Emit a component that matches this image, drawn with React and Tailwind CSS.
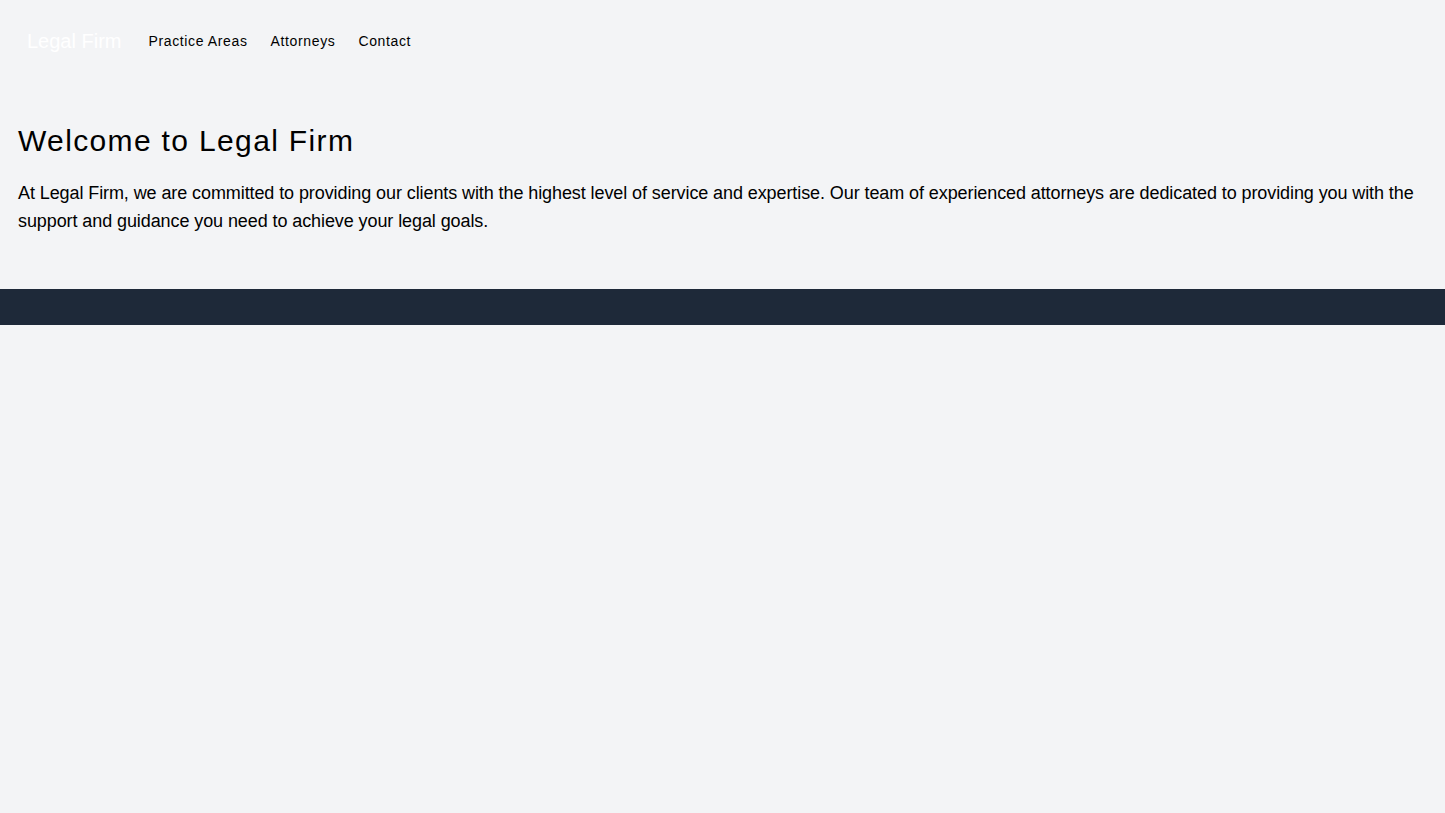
export default function App() {
  const links = ['Practice Areas', 'Attorneys', 'Contact'];

  return (
    <div className="min-h-[813px] bg-gray-100 font-['Liberation_Sans',sans-serif] text-black">
      <header className="flex items-center px-6 pb-6 pt-[27px]">
        <span className="ml-[3px] mr-[27px] text-xl leading-7 text-white">Legal Firm</span>
        <nav className="flex items-center gap-[23px] text-sm tracking-[0.045em]">
          {links.map((link) => (
            <a key={link} href="#">
              {link}
            </a>
          ))}
        </nav>
      </header>

      <main className="px-[18px] pb-[54px] pt-[44px]">
        <h1 className="mb-5 text-3xl tracking-[0.045em]">Welcome to Legal Firm</h1>
        <p className="text-lg leading-7 tracking-[-0.005em]">
          At Legal Firm, we are committed to providing our clients with the highest level of service and
          expertise. Our team of experienced attorneys are dedicated to providing you with the support and
          guidance you need to achieve your legal goals.
        </p>
      </main>

      <footer className="h-9 bg-gray-800" />
    </div>
  );
}
